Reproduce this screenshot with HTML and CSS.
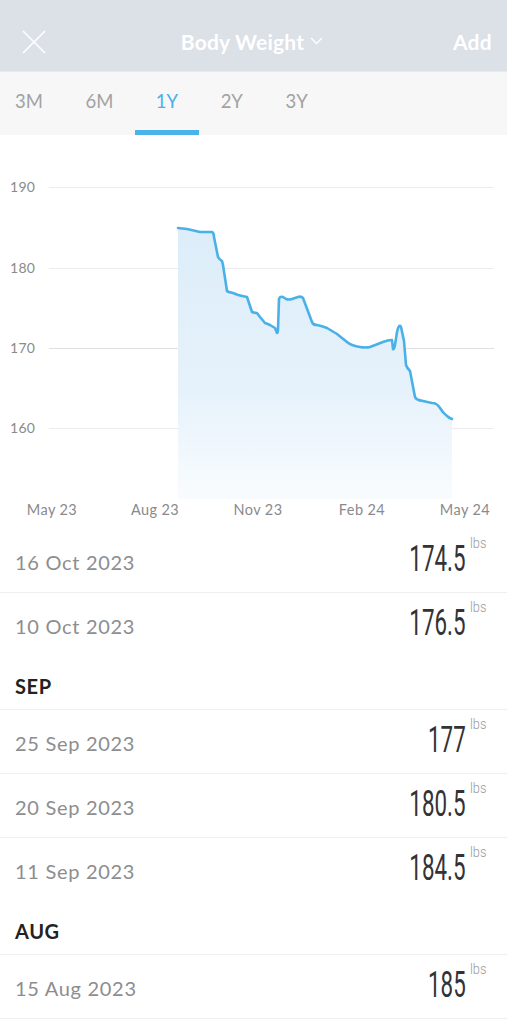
FILE: index.html
```html
<!DOCTYPE html>
<html lang="en">
<head>
<meta charset="utf-8">
<title>Body Weight</title>
<link rel="stylesheet" href="styles.css">
</head>
<body>
<div class="app">
  <header class="topbar">
    <div class="close">
      <svg width="24" height="24" viewBox="0 0 24 24"><path d="M1 1 L23 23 M23 1 L1 23" stroke="#fff" stroke-width="1.6" fill="none"/></svg>
    </div>
    <div class="title">Body Weight
      <svg class="chev" width="13" height="8" viewBox="0 0 13 8"><path d="M1 1 L6.5 6.5 L12 1" stroke="#fff" stroke-width="1.3" fill="none"/></svg>
    </div>
    <div class="add">Add</div>
  </header>

  <nav class="tabs">
    <div class="tab">3M</div>
    <div class="tab">6M</div>
    <div class="tab active">1Y</div>
    <div class="tab">2Y</div>
    <div class="tab">3Y</div>
  </nav>

  <section class="chart">
    <svg width="507" height="394" viewBox="0 0 507 394">
      <defs>
        <linearGradient id="fillg" x1="0" y1="0" x2="0" y2="1">
          <stop offset="0" stop-color="#dcedf9"/>
          <stop offset="0.6" stop-color="#e6f2fb"/>
          <stop offset="1" stop-color="#f9fcfe"/>
        </linearGradient>
      </defs>
      <g class="grid">
        <line x1="49" y1="52.5" x2="494" y2="52.5"/>
        <line x1="49" y1="133.5" x2="494" y2="133.5"/>
        <line x1="49" y1="213.5" x2="494" y2="213.5" class="mid"/>
        <line x1="49" y1="293.5" x2="494" y2="293.5"/>
      </g>
      <g class="ylab">
        <text x="10" y="57">190</text>
        <text x="10" y="138">180</text>
        <text x="10" y="218">170</text>
        <text x="10" y="298">160</text>
      </g>
      <path class="area" d="M178 93 L187 94 L200 97 L212 97 Q214 98 214 102 L218 122 Q219 124 222 126 L223 130 L227 156 Q228 157 233 158 L238 160 Q242 161 247 162 L252 177 Q255 178 257 178 L260 182 L265 188 Q268 189 270 190 L275 193 L277 198 Q278 198 278 194 L279 164 Q280 161 283 162 L286 164 Q289 165 292 164 L298 162 Q301 161 303 163 L312 187 Q313 190 317 190 Q322 191 327 193 L337 199 Q342 203 347 207 Q352 211 360 212 Q366 213 370 212 L383 207 Q388 205 392 205 L393 214 Q394 215 395 210 L397 197 Q399 188 401 192 L404 206 L406 230 Q407 233 410 236 L415 262 Q416 265 423 266 L432 268 Q437 268 440 273 Q443 278 447 281 Q449 283 452 284 L452 364 L178 364 Z"/>
      <path class="line" d="M178 93 L187 94 L200 97 L212 97 Q214 98 214 102 L218 122 Q219 124 222 126 L223 130 L227 156 Q228 157 233 158 L238 160 Q242 161 247 162 L252 177 Q255 178 257 178 L260 182 L265 188 Q268 189 270 190 L275 193 L277 198 Q278 198 278 194 L279 164 Q280 161 283 162 L286 164 Q289 165 292 164 L298 162 Q301 161 303 163 L312 187 Q313 190 317 190 Q322 191 327 193 L337 199 Q342 203 347 207 Q352 211 360 212 Q366 213 370 212 L383 207 Q388 205 392 205 L393 214 Q394 215 395 210 L397 197 Q399 188 401 192 L404 206 L406 230 Q407 233 410 236 L415 262 Q416 265 423 266 L432 268 Q437 268 440 273 Q443 278 447 281 Q449 283 452 284"/>
      <g class="xlab">
        <text x="52" y="380">May 23</text>
        <text x="155" y="380">Aug 23</text>
        <text x="258" y="380">Nov 23</text>
        <text x="362" y="380">Feb 24</text>
        <text x="465" y="380">May 24</text>
      </g>
    </svg>
  </section>

  <ul class="list">
    <li class="row"><span class="date">16 Oct 2023</span><span class="val"><span class="num">174.5</span><span class="unit">lbs</span></span></li>
    <li class="row last"><span class="date">10 Oct 2023</span><span class="val"><span class="num">176.5</span><span class="unit">lbs</span></span></li>
    <li class="month">SEP</li>
    <li class="row"><span class="date">25 Sep 2023</span><span class="val"><span class="num">177</span><span class="unit">lbs</span></span></li>
    <li class="row"><span class="date">20 Sep 2023</span><span class="val"><span class="num">180.5</span><span class="unit">lbs</span></span></li>
    <li class="row last"><span class="date">11 Sep 2023</span><span class="val"><span class="num">184.5</span><span class="unit">lbs</span></span></li>
    <li class="month">AUG</li>
    <li class="row"><span class="date">15 Aug 2023</span><span class="val"><span class="num">185</span><span class="unit">lbs</span></span></li>
  </ul>
</div>
</body>
</html>
```

FILE: styles.css
```css
* { box-sizing: border-box; }
html, body { margin: 0; padding: 0; background: #fff; }
body { font-family: Lato, "Open Sans", sans-serif; overflow: hidden; }
.app { width: 507px; height: 1035px; overflow: hidden; }

.topbar {
  height: 72px;
  background: #dce0e7;
  border-bottom: 1px solid #e9eaec;
  display: grid;
  grid-template-columns: 1fr auto 1fr;
  align-items: center;
  padding: 12px 15px 0 15px;
  color: #fff;
}
.close { display: flex; align-items: center; padding-left: 7px; }
.title {
  font-weight: 700;
  font-size: 21px;
  letter-spacing: 0.2px;
  display: flex;
  align-items: center;
  gap: 6px;
  margin-right: 3px;
}
.chev { margin-top: -2px; }
.add { justify-self: end; font-weight: 700; font-size: 21px; letter-spacing: 0.3px; }

.tabs {
  height: 63px;
  background: #f7f7f7;
  display: flex;
  margin: 0;
  padding-left: 0;
}
.tab {
  padding: 0 21.25px 6px;
  display: flex;
  align-items: center;
  font-size: 18.5px;
  color: #a2a2a4;
  position: relative;
}
.tab:first-child { margin-left: -6.25px; }
.tab.active { color: #4aafe8; }
.tab.active::after {
  content: "";
  position: absolute;
  left: 0; right: 0; bottom: 0;
  height: 5px;
  background: #4ab3e9;
}

.chart { height: 394px; background: #fff; }
.chart svg { display: block; }
.grid line { stroke: #ececee; stroke-width: 1; }
.grid line.mid { stroke: #dfe0e3; }
.ylab text { font-size: 14px; letter-spacing: 0.3px; fill: #8a8a8c; font-family: Lato, sans-serif; }
.xlab text { font-size: 14.5px; letter-spacing: 0.4px; fill: #8a8a8c; text-anchor: middle; font-family: Lato, sans-serif; }
.area { fill: url(#fillg); }
.line { fill: none; stroke: #4ab1e8; stroke-width: 2.6; stroke-linejoin: round; stroke-linecap: round; }

.list { list-style: none; margin: 0; padding: 0; }
.row {
  height: 64px;
  border-bottom: 1px solid #efefef;
  display: flex;
  align-items: center;
  justify-content: space-between;
  padding: 2px 18px 0 15px;
}
.row.last { border-bottom: none; }
.date { font-size: 20px; color: #8d8d8f; letter-spacing: 0.7px; }
.val { display: flex; align-items: flex-start; margin-top: -6px; }
.num {
  font-family: Roboto, "Liberation Sans", sans-serif;
  font-size: 36px;
  color: #333336;
  display: inline-block;
  transform: scaleX(0.62);
  transform-origin: right center;
  margin-left: -40px;
  line-height: 1;
}
.unit {
  font-family: Roboto, "Liberation Sans", sans-serif;
  font-size: 15px;
  font-weight: 300;
  color: #9a9a9c;
  margin-left: 4px;
  margin-top: -7px;
  display: inline-block;
  transform: scaleX(0.85);
  transform-origin: left center;
}
.month {
  height: 53px;
  border-bottom: 1px solid #efefef;
  padding: 17px 15px 0;
  font-weight: 700;
  font-size: 20px;
  letter-spacing: 0.6px;
  color: #222;
}
```
